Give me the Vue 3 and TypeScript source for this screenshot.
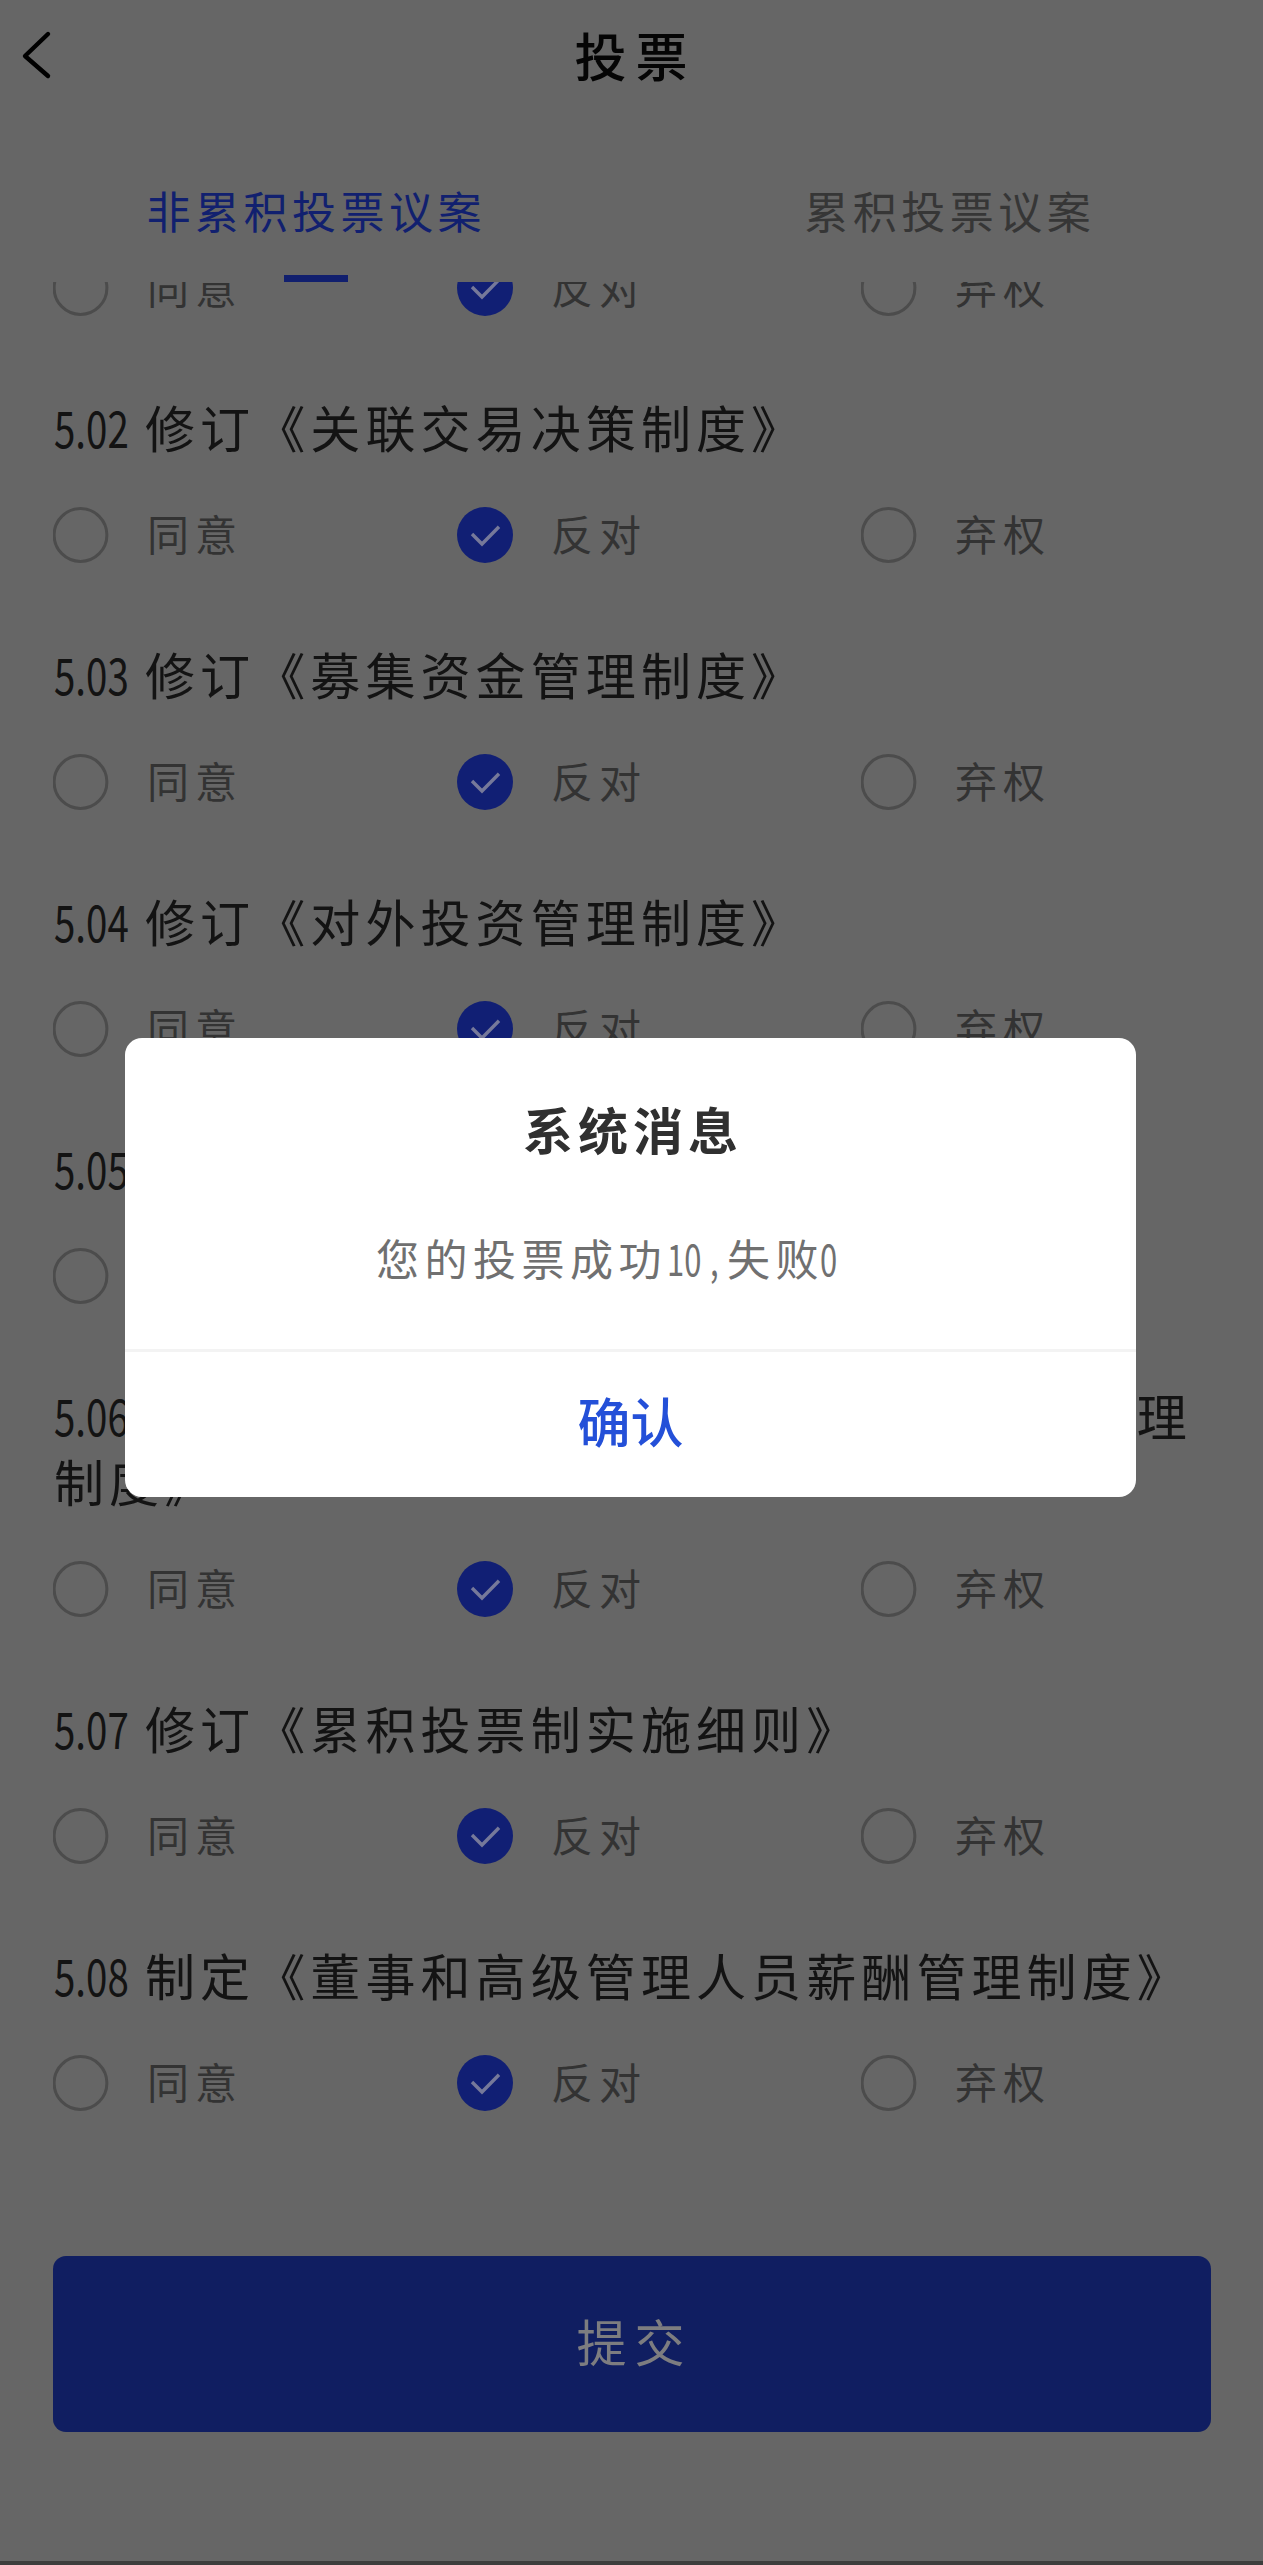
<script setup lang="ts">
import { ref } from 'vue'

interface Proposal {
  no: string
  title: string
}

const options: string[] = ['同意', '反对', '弃权']
const chosen = ref<number>(1)

const proposals: Proposal[] = [
  { no: '', title: '' },
  { no: '5.02', title: '修订《关联交易决策制度》' },
  { no: '5.03', title: '修订《募集资金管理制度》' },
  { no: '5.04', title: '修订《对外投资管理制度》' },
  { no: '5.05', title: '修订《对外担保管理制度》' },
  { no: '5.06', title: '修订《防范控股股东及关联方资金占用管理制度》' },
  { no: '5.07', title: '修订《累积投票制实施细则》' },
  { no: '5.08', title: '制定《董事和高级管理人员薪酬管理制度》' },
]
</script>

<template>
  <div class="page">
    <header class="bar">
      <svg class="back" width="32" height="50" viewBox="0 0 32 50">
        <path d="M27 4 L4 26 L27 46" fill="none" stroke="#000" stroke-width="4.4" stroke-linecap="round" stroke-linejoin="round" />
      </svg>
      <h1>投票</h1>
    </header>

    <nav class="tabs">
      <div class="tab active"><span>非累积投票议案</span></div>
      <div class="tab"><span>累积投票议案</span></div>
    </nav>

    <main class="list">
      <section v-for="p in proposals" :key="p.no" class="item">
        <h2 v-if="p.title"><span class="no"><i>{{ p.no }}</i></span>{{ p.title }}</h2>
        <div class="options">
          <div v-for="(o, i) in options" :key="o" class="option">
            <svg width="56" height="56" viewBox="0 0 56 56">
              <template v-if="i === chosen">
                <circle cx="28" cy="28" r="28" fill="#111f74" />
                <path d="M15 27 L25 37 L42 19.7" fill="none" stroke="#76799a" stroke-width="3.4" />
              </template>
              <circle v-else cx="27.5" cy="28" r="26.4" fill="none" stroke="#4c4c4c" stroke-width="3" />
            </svg>
            <span>{{ o }}</span>
          </div>
        </div>
      </section>
    </main>

    <button class="submit">提交</button>
    <div class="edge"></div>

    <div class="mask">
      <div class="dialog">
        <div class="dialog-title">系统消息</div>
        <div class="dialog-text">您的投票成功<span class="n two"><i>10</i></span><span class="n comma"><i>,</i></span>失败<span class="n one"><i>0</i></span></div>
        <div class="dialog-ok">确认</div>
      </div>
    </div>
  </div>
</template>

<style>
body {
  margin: 0;
  background: #666;
}
</style>

<style scoped>
.page {
  position: relative;
  display: flex;
  flex-direction: column;
  width: 1263px;
  height: 2565px;
  overflow: hidden;
  background: #666;
  font-family: "Noto Sans CJK SC", sans-serif;
}
h1,
h2 {
  margin: 0;
  font-weight: 400;
}
i {
  display: inline-block;
  font-style: normal;
  transform-origin: left center;
}
.bar {
  display: flex;
  align-items: center;
  height: 110px;
  flex: none;
}
.back {
  margin-left: 21px;
}
.bar h1 {
  flex: 1;
  margin-right: 53px;
  text-align: center;
  font-size: 52px;
  font-weight: 500;
  letter-spacing: 9px;
  text-indent: 8px;
  line-height: 110px;
  color: #050505;
}
.tabs {
  display: flex;
  flex: none;
  height: 172px;
}
.tab {
  display: flex;
  flex: 1;
  flex-direction: column;
  align-items: center;
  font-size: 44px;
  letter-spacing: 4.5px;
  color: #363636;
}
.tab span {
  line-height: 66px;
  padding: 67px 0 0 5px;
}
.tab.active {
  color: #11206f;
}
.tab.active span {
  padding-left: 1px;
}
.tab.active::after {
  content: "";
  width: 64px;
  height: 8px;
  margin-top: 32px;
  background: #111f6e;
}
.list {
  flex: none;
  height: 1909px;
  overflow: hidden;
}
.item {
  padding: 0 50px 80px 53px;
}
.item:first-child {
  margin-top: -22px;
}
h2 {
  margin: -3px 0 48px;
  padding-left: 1px;
  font-size: 50px;
  letter-spacing: 5.1px;
  line-height: 66px;
  color: #131313;
}
.item + .item {
  padding-top: 0.02px;
}
.no {
  display: inline-block;
  width: 91px;
  letter-spacing: 0;
  white-space: nowrap;
}
.no i {
  transform: scaleX(0.77);
}
.options {
  display: flex;
}
.option {
  display: flex;
  align-items: center;
  flex: none;
  width: 404px;
  height: 56px;
}
.option span {
  margin-left: 38px;
  padding-bottom: 5px;
  font-size: 42px;
  letter-spacing: 6px;
  line-height: 56px;
  color: #333;
}
.submit {
  flex: none;
  width: 1158px;
  height: 176px;
  margin: 65px 0 0 53px;
  padding: 0 0 9px;
  border: 0;
  border-radius: 13px;
  background: #101e61;
  color: #7d7d80;
  font-family: inherit;
  font-size: 50px;
  letter-spacing: 8px;
  text-indent: 5px;
}
.edge {
  margin-top: auto;
  height: 4px;
  background: #3d3d3d;
}
.mask {
  position: absolute;
  inset: 0;
}
.dialog {
  display: flex;
  flex-direction: column;
  width: 1011px;
  height: 459px;
  margin: 1038px 0 0 125px;
  border-radius: 17px;
  background: #fff;
}
.dialog-title {
  padding-top: 57px;
  text-align: center;
  font-size: 50px;
  font-weight: 700;
  letter-spacing: 5px;
  text-indent: 5px;
  line-height: 66px;
  color: #303030;
}
.dialog-text {
  padding: 63px 0 0 251px;
  height: 125px;
  font-size: 43px;
  letter-spacing: 5.5px;
  line-height: 66px;
  white-space: nowrap;
  color: #707070;
}
.n {
  display: inline-block;
  letter-spacing: 0;
}
.n i {
  transform: scaleX(0.72);
}
.two {
  width: 43px;
}
.comma {
  width: 17px;
}
.one {
  width: 20px;
}
.one i {
  transform: translateX(-4px) scaleX(0.72);
}
.dialog-ok {
  flex: 1;
  border-top: 3px solid #f3f3f3;
  text-align: center;
  font-size: 53px;
  font-weight: 500;
  line-height: 137px;
  color: #2450d8;
}
</style>
